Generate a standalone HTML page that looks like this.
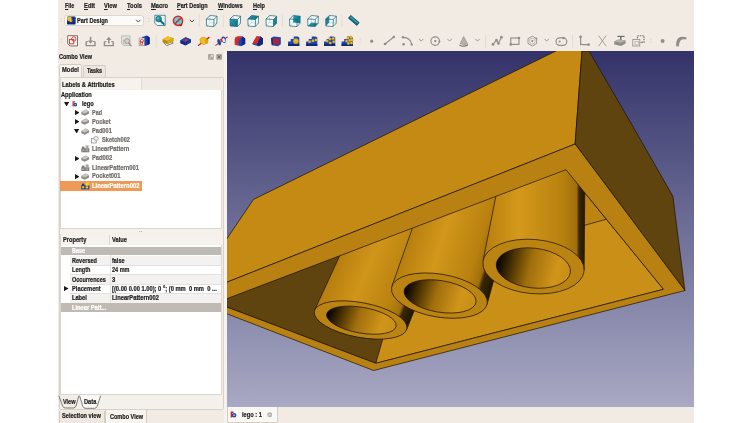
<!DOCTYPE html>
<html><head><meta charset="utf-8"><title>FreeCAD</title>
<style>
html,body{margin:0;padding:0;background:#ffffff;}
body{width:752px;height:423px;position:relative;overflow:hidden;font-family:"Liberation Sans", sans-serif;}
.t{position:absolute;white-space:nowrap;transform-origin:0 50%;-webkit-text-stroke:0.22px currentColor;}
.b{position:absolute;box-sizing:border-box;}
u{text-decoration-thickness:0.5px;text-underline-offset:0.6px;}
</style></head><body>
<div id="app" style="position:absolute;left:0;top:0;width:752px;height:423px;will-change:transform;">
<div class="b" style="left:58px;top:0px;width:636px;height:423px;background:#f2ebe4;"></div>
<svg style="position:absolute;left:0;top:0" width="752" height="423" viewBox="0 0 752 423">
<defs>
<linearGradient id="bg" x1="0" y1="0" x2="0" y2="1"><stop offset="0" stop-color="#33336a"/><stop offset="1" stop-color="#a9a9c4"/></linearGradient>
<clipPath id="vc"><rect x="227" y="51" width="467" height="356"/></clipPath>
<linearGradient id="t1" gradientUnits="userSpaceOnUse" x1="314.2" y1="312.5" x2="399.1" y2="348.1"><stop offset="0" stop-color="#b57d0e"/><stop offset="0.35" stop-color="#d0951a"/><stop offset="0.74" stop-color="#b8810f"/><stop offset="0.85" stop-color="#a06e0b"/><stop offset="0.885" stop-color="#3a2800"/><stop offset="1" stop-color="#1f1500"/></linearGradient>
<linearGradient id="t2" gradientUnits="userSpaceOnUse" x1="391.3" y1="289.3" x2="483.1" y2="317.7"><stop offset="0" stop-color="#b57d0e"/><stop offset="0.35" stop-color="#d2971b"/><stop offset="0.74" stop-color="#b8810f"/><stop offset="0.85" stop-color="#a06e0b"/><stop offset="0.885" stop-color="#3a2800"/><stop offset="1" stop-color="#1f1500"/></linearGradient>
<linearGradient id="t3" gradientUnits="userSpaceOnUse" x1="482.8" y1="263.4" x2="585.2" y2="263.4"><stop offset="0" stop-color="#b57d0e"/><stop offset="0.35" stop-color="#d4991b"/><stop offset="0.78" stop-color="#b8810f"/><stop offset="0.915" stop-color="#a06e0b"/><stop offset="0.94" stop-color="#3a2800"/><stop offset="1" stop-color="#1f1500"/></linearGradient>
<linearGradient id="h1" gradientUnits="userSpaceOnUse" x1="327" y1="315" x2="395" y2="327"><stop offset="0" stop-color="#000"/><stop offset="0.12" stop-color="#2a1c00"/><stop offset="0.45" stop-color="#a06e0c"/><stop offset="0.8" stop-color="#d0951a"/><stop offset="1" stop-color="#c88e16"/></linearGradient>
<linearGradient id="h2" gradientUnits="userSpaceOnUse" x1="404" y1="291" x2="474" y2="301"><stop offset="0" stop-color="#000"/><stop offset="0.12" stop-color="#2a1c00"/><stop offset="0.45" stop-color="#a06e0c"/><stop offset="0.8" stop-color="#d0951a"/><stop offset="1" stop-color="#c88e16"/></linearGradient>
<linearGradient id="h3" gradientUnits="userSpaceOnUse" x1="496" y1="264" x2="571" y2="273"><stop offset="0" stop-color="#000"/><stop offset="0.12" stop-color="#2a1c00"/><stop offset="0.45" stop-color="#a06e0c"/><stop offset="0.8" stop-color="#d0951a"/><stop offset="1" stop-color="#c88e16"/></linearGradient>
</defs>
<g clip-path="url(#vc)">
<rect x="227" y="51" width="467" height="356" fill="url(#bg)"/>
<polygon points="215.8,302.9 566,169.7 663.5,289.3 375.8,363.3" fill="#c98f16" stroke="#1a1200" stroke-width="0.7" stroke-linejoin="round"/>
<polygon points="566,169.7 606.3,219.2 560,232.2" fill="#bd8412" stroke="#1a1200" stroke-width="0.7" stroke-linejoin="round"/>
<polygon points="215.8,302.9 360,235 390,314 375.8,363.3" fill="#5f4410" stroke="#1a1200" stroke-width="0.7" stroke-linejoin="round"/>
<polygon points="351.6,230 448.4,225 406.54892708381936,329.8647614373134 360.6,320 314.79733099899687,309.79311197358766" fill="url(#t1)" stroke="#1a1200" stroke-width="0.7" stroke-linejoin="round"/>
<ellipse cx="360.6" cy="320" rx="47.1" ry="17.4" transform="rotate(10.6 360.6 320)" fill="#bb8312" stroke="#1a1200" stroke-width="0.7" />
<ellipse cx="361.4" cy="320.2" rx="35.3" ry="12.9" transform="rotate(9.8 361.4 320.2)" fill="url(#h1)" stroke="#1a1200" stroke-width="0.7" />
<polygon points="422.3,200 518.4,190 487.03453907284097,304.52214531459106 439.4,295.6 391.9783687617179,285.99194550559884" fill="url(#t2)" stroke="#1a1200" stroke-width="0.7" stroke-linejoin="round"/>
<ellipse cx="439.4" cy="295.6" rx="48.5" ry="21.5" transform="rotate(9.5 439.4 295.6)" fill="#bb8312" stroke="#1a1200" stroke-width="0.7" />
<ellipse cx="440.1" cy="296.4" rx="36.4" ry="15.8" transform="rotate(9.3 440.1 296.4)" fill="url(#h2)" stroke="#1a1200" stroke-width="0.7" />
<polygon points="501,170 585,160 584.1615498378931,269.79571051568746 533.5,266.55 483.1040630658077,260.62238553709454" fill="url(#t3)" stroke="#1a1200" stroke-width="0.7" stroke-linejoin="round"/>
<ellipse cx="533.5" cy="266.55" rx="50.8" ry="27.1" transform="rotate(5 533.5 266.55)" fill="#bb8312" stroke="#1a1200" stroke-width="0.7" />
<ellipse cx="533.35" cy="268.05" rx="37.3" ry="19.9" transform="rotate(6.6 533.35 268.05)" fill="url(#h3)" stroke="#1a1200" stroke-width="0.7" />
<polygon points="253.5,199.4 556,51 600,20 582,51 575.1,144 186.6,298.2" fill="#c48a13" stroke="#1a1200" stroke-width="0.7" stroke-linejoin="round"/>
<polygon points="575.1,144 582,51 589,51 629.2,120 672.9,196.3 684.9,290.5" fill="#5f4410" stroke="#1a1200" stroke-width="0.7" stroke-linejoin="round"/>
<path d="M186.6,298.2 L575.1,144 L684.9,290.5 L373.6,370.5Z M215.8,302.9 L566,169.7 L663.5,289.3 L375.8,363.3Z" fill="#b88111" fill-rule="evenodd" stroke="#1a1200" stroke-width="0.7" stroke-linejoin="round"/>
</g></svg>
<span class="t" id="t0" style="left:64.8px;top:1.70px;font-size:6.5px;line-height:7.80px;font-weight:bold;color:#1f1f1f;transform:scaleX(0.8201);"><u>F</u>ile</span>
<span class="t" id="t1" style="left:83.5px;top:1.70px;font-size:6.5px;line-height:7.80px;font-weight:bold;color:#1f1f1f;transform:scaleX(0.8945);"><u>E</u>dit</span>
<span class="t" id="t2" style="left:104px;top:1.70px;font-size:6.5px;line-height:7.80px;font-weight:bold;color:#1f1f1f;transform:scaleX(0.8842);"><u>V</u>iew</span>
<span class="t" id="t3" style="left:126.5px;top:1.70px;font-size:6.5px;line-height:7.80px;font-weight:bold;color:#1f1f1f;transform:scaleX(0.8889);"><u>T</u>ools</span>
<span class="t" id="t4" style="left:150.5px;top:1.70px;font-size:6.5px;line-height:7.80px;font-weight:bold;color:#1f1f1f;transform:scaleX(0.8874);"><u>M</u>acro</span>
<span class="t" id="t5" style="left:177px;top:1.70px;font-size:6.5px;line-height:7.80px;font-weight:bold;color:#1f1f1f;transform:scaleX(0.8439);"><u>P</u>art Design</span>
<span class="t" id="t6" style="left:218px;top:1.70px;font-size:6.5px;line-height:7.80px;font-weight:bold;color:#1f1f1f;transform:scaleX(0.8606);"><u>W</u>indows</span>
<span class="t" id="t7" style="left:252.5px;top:1.70px;font-size:6.5px;line-height:7.80px;font-weight:bold;color:#1f1f1f;transform:scaleX(0.8505);"><u>H</u>elp</span>
<div class="b" style="left:64.3px;top:15.2px;width:79.5px;height:11px;background:#fcfbf9;border:0.6px solid #ddd6cd;border-radius:2.5px;"></div>
<span class="t" id="t8" style="left:77px;top:16.90px;font-size:6.5px;line-height:7.80px;font-weight:bold;color:#1f1f1f;transform:scaleX(0.8581);">Part Design</span>
<svg style="position:absolute;left:0;top:0" width="752" height="52" viewBox="0 0 752 52">
<defs><linearGradient id="tealg" x1="0" y1="0" x2="1" y2="1"><stop offset="0" stop-color="#2a9db4"/><stop offset="1" stop-color="#0f6c82"/></linearGradient></defs>
<rect x="60.6" y="18.3" width="0.9" height="0.9" fill="#cbc4bb"/><rect x="60.6" y="21.1" width="0.9" height="0.9" fill="#cbc4bb"/>
<g transform="translate(67 16.6) scale(1)"><rect x="0" y="0" width="8.6" height="8" rx="1.2" fill="#0d2a80"/><polygon points="0.2,0.4 4.2,0.4 6.4,4 4,5.6 0.2,3.6" fill="#f0c020"/><rect x="4.6" y="1" width="3.6" height="3" fill="#1a36a0"/></g>
<path d="M136.10000000000002,19.799999999999997 L138.3,22.0 L140.5,19.799999999999997" fill="none" stroke="#3a3836" stroke-width="0.9"/>
<rect x="148.4" y="18.3" width="0.9" height="0.9" fill="#cbc4bb"/><rect x="148.4" y="21.1" width="0.9" height="0.9" fill="#cbc4bb"/>
<g transform="translate(154.3 14.8) scale(1)"><path d="M0.5,0.5 h10.4 v10.2 h-8 l-2.4,-2.4z" fill="#f4fbfc" stroke="#0e6274" stroke-width="0.7"/><circle cx="4.4" cy="4.2" r="2.9" fill="#1f8ea3" stroke="#0e6274" stroke-width="0.6"/><circle cx="3.7" cy="3.5" r="1.1" fill="#5fc4d6"/><path d="M6.4,6.2 L9.4,9.2" stroke="#0e6274" stroke-width="1.8" stroke-linecap="round"/></g>
<g transform="translate(172.4 15.4) scale(1)"><circle cx="7.8" cy="8.6" r="2.2" fill="#5a1a10"/><circle cx="5.6" cy="5.4" r="4.6" fill="#59d0e6" stroke="#dc2a20" stroke-width="1.5"/><path d="M2.3,8.6 L8.9,2.2" stroke="#dc2a20" stroke-width="1.5"/></g>
<path d="M189.8,19.799999999999997 L192,22.0 L194.2,19.799999999999997" fill="none" stroke="#3a3836" stroke-width="0.9"/>
<line x1="199.3" y1="14.5" x2="199.3" y2="27" stroke="#ddd6cd" stroke-width="0.7"/>
<g transform="translate(205.6 14.6) scale(1)"><polygon points="0.80,4.40 4.50,0.90 11.40,1.60 11.20,8.70 8.20,11.90 1.00,11.40" fill="#fbfdfd"/><line x1="4.20" y1="8.00" x2="4.50" y2="0.90" stroke="#7fb9c4" stroke-width="0.45" fill="none"/><line x1="4.20" y1="8.00" x2="11.20" y2="8.70" stroke="#7fb9c4" stroke-width="0.45" fill="none"/><line x1="4.20" y1="8.00" x2="1.00" y2="11.40" stroke="#7fb9c4" stroke-width="0.45" fill="none"/><polygon points="0.80,4.40 4.50,0.90 11.40,1.60 11.20,8.70 8.20,11.90 1.00,11.40" stroke="#0e6274" stroke-width="0.7" fill="none" stroke-linejoin="round"/><line x1="0.80" y1="4.40" x2="8.40" y2="4.80" stroke="#0e6274" stroke-width="0.7" fill="none" stroke-linejoin="round"/><line x1="8.40" y1="4.80" x2="11.40" y2="1.60" stroke="#0e6274" stroke-width="0.7" fill="none" stroke-linejoin="round"/><line x1="8.40" y1="4.80" x2="8.20" y2="11.90" stroke="#0e6274" stroke-width="0.7" fill="none" stroke-linejoin="round"/></g>
<line x1="223.2" y1="14.5" x2="223.2" y2="27" stroke="#ddd6cd" stroke-width="0.7"/>
<g transform="translate(229.2 14.6) scale(1)"><polygon points="0.80,4.40 4.50,0.90 11.40,1.60 11.20,8.70 8.20,11.90 1.00,11.40" fill="#fbfdfd"/><line x1="4.20" y1="8.00" x2="4.50" y2="0.90" stroke="#7fb9c4" stroke-width="0.45" fill="none"/><line x1="4.20" y1="8.00" x2="11.20" y2="8.70" stroke="#7fb9c4" stroke-width="0.45" fill="none"/><line x1="4.20" y1="8.00" x2="1.00" y2="11.40" stroke="#7fb9c4" stroke-width="0.45" fill="none"/><polygon points="0.80,4.40 8.40,4.80 8.20,11.90 1.00,11.40" fill="url(#tealg)"/><polygon points="0.80,4.40 4.50,0.90 11.40,1.60 11.20,8.70 8.20,11.90 1.00,11.40" stroke="#0e6274" stroke-width="0.7" fill="none" stroke-linejoin="round"/><line x1="0.80" y1="4.40" x2="8.40" y2="4.80" stroke="#0e6274" stroke-width="0.7" fill="none" stroke-linejoin="round"/><line x1="8.40" y1="4.80" x2="11.40" y2="1.60" stroke="#0e6274" stroke-width="0.7" fill="none" stroke-linejoin="round"/><line x1="8.40" y1="4.80" x2="8.20" y2="11.90" stroke="#0e6274" stroke-width="0.7" fill="none" stroke-linejoin="round"/></g>
<g transform="translate(247.1 14.6) scale(1)"><polygon points="0.80,4.40 4.50,0.90 11.40,1.60 11.20,8.70 8.20,11.90 1.00,11.40" fill="#fbfdfd"/><line x1="4.20" y1="8.00" x2="4.50" y2="0.90" stroke="#7fb9c4" stroke-width="0.45" fill="none"/><line x1="4.20" y1="8.00" x2="11.20" y2="8.70" stroke="#7fb9c4" stroke-width="0.45" fill="none"/><line x1="4.20" y1="8.00" x2="1.00" y2="11.40" stroke="#7fb9c4" stroke-width="0.45" fill="none"/><polygon points="0.80,4.40 4.50,0.90 11.40,1.60 8.40,4.80" fill="url(#tealg)"/><polygon points="0.80,4.40 4.50,0.90 11.40,1.60 11.20,8.70 8.20,11.90 1.00,11.40" stroke="#0e6274" stroke-width="0.7" fill="none" stroke-linejoin="round"/><line x1="0.80" y1="4.40" x2="8.40" y2="4.80" stroke="#0e6274" stroke-width="0.7" fill="none" stroke-linejoin="round"/><line x1="8.40" y1="4.80" x2="11.40" y2="1.60" stroke="#0e6274" stroke-width="0.7" fill="none" stroke-linejoin="round"/><line x1="8.40" y1="4.80" x2="8.20" y2="11.90" stroke="#0e6274" stroke-width="0.7" fill="none" stroke-linejoin="round"/></g>
<g transform="translate(265.2 14.6) scale(1)"><polygon points="0.80,4.40 4.50,0.90 11.40,1.60 11.20,8.70 8.20,11.90 1.00,11.40" fill="#fbfdfd"/><line x1="4.20" y1="8.00" x2="4.50" y2="0.90" stroke="#7fb9c4" stroke-width="0.45" fill="none"/><line x1="4.20" y1="8.00" x2="11.20" y2="8.70" stroke="#7fb9c4" stroke-width="0.45" fill="none"/><line x1="4.20" y1="8.00" x2="1.00" y2="11.40" stroke="#7fb9c4" stroke-width="0.45" fill="none"/><polygon points="8.40,4.80 11.40,1.60 11.20,8.70 8.20,11.90" fill="url(#tealg)"/><polygon points="0.80,4.40 4.50,0.90 11.40,1.60 11.20,8.70 8.20,11.90 1.00,11.40" stroke="#0e6274" stroke-width="0.7" fill="none" stroke-linejoin="round"/><line x1="0.80" y1="4.40" x2="8.40" y2="4.80" stroke="#0e6274" stroke-width="0.7" fill="none" stroke-linejoin="round"/><line x1="8.40" y1="4.80" x2="11.40" y2="1.60" stroke="#0e6274" stroke-width="0.7" fill="none" stroke-linejoin="round"/><line x1="8.40" y1="4.80" x2="8.20" y2="11.90" stroke="#0e6274" stroke-width="0.7" fill="none" stroke-linejoin="round"/></g>
<line x1="282.4" y1="14.5" x2="282.4" y2="27" stroke="#ddd6cd" stroke-width="0.7"/>
<g transform="translate(288.8 14.6) scale(1)"><polygon points="0.80,4.40 4.50,0.90 11.40,1.60 11.20,8.70 8.20,11.90 1.00,11.40" fill="#fbfdfd"/><polygon points="4.50,0.90 11.40,1.60 11.20,8.70 4.20,8.00" fill="url(#tealg)"/><line x1="4.20" y1="8.00" x2="4.50" y2="0.90" stroke="#7fb9c4" stroke-width="0.45" fill="none"/><line x1="4.20" y1="8.00" x2="11.20" y2="8.70" stroke="#7fb9c4" stroke-width="0.45" fill="none"/><line x1="4.20" y1="8.00" x2="1.00" y2="11.40" stroke="#7fb9c4" stroke-width="0.45" fill="none"/><polygon points="0.80,4.40 4.50,0.90 11.40,1.60 11.20,8.70 8.20,11.90 1.00,11.40" stroke="#0e6274" stroke-width="0.7" fill="none" stroke-linejoin="round"/><line x1="0.80" y1="4.40" x2="8.40" y2="4.80" stroke="#0e6274" stroke-width="0.7" fill="none" stroke-linejoin="round"/><line x1="8.40" y1="4.80" x2="11.40" y2="1.60" stroke="#0e6274" stroke-width="0.7" fill="none" stroke-linejoin="round"/><line x1="8.40" y1="4.80" x2="8.20" y2="11.90" stroke="#0e6274" stroke-width="0.7" fill="none" stroke-linejoin="round"/></g>
<g transform="translate(306.9 14.6) scale(1)"><polygon points="0.80,4.40 4.50,0.90 11.40,1.60 11.20,8.70 8.20,11.90 1.00,11.40" fill="#fbfdfd"/><polygon points="1.00,11.40 8.20,11.90 11.20,8.70 4.20,8.00" fill="url(#tealg)"/><line x1="4.20" y1="8.00" x2="4.50" y2="0.90" stroke="#7fb9c4" stroke-width="0.45" fill="none"/><line x1="4.20" y1="8.00" x2="11.20" y2="8.70" stroke="#7fb9c4" stroke-width="0.45" fill="none"/><line x1="4.20" y1="8.00" x2="1.00" y2="11.40" stroke="#7fb9c4" stroke-width="0.45" fill="none"/><polygon points="0.80,4.40 4.50,0.90 11.40,1.60 11.20,8.70 8.20,11.90 1.00,11.40" stroke="#0e6274" stroke-width="0.7" fill="none" stroke-linejoin="round"/><line x1="0.80" y1="4.40" x2="8.40" y2="4.80" stroke="#0e6274" stroke-width="0.7" fill="none" stroke-linejoin="round"/><line x1="8.40" y1="4.80" x2="11.40" y2="1.60" stroke="#0e6274" stroke-width="0.7" fill="none" stroke-linejoin="round"/><line x1="8.40" y1="4.80" x2="8.20" y2="11.90" stroke="#0e6274" stroke-width="0.7" fill="none" stroke-linejoin="round"/></g>
<g transform="translate(324.9 14.6) scale(1)"><polygon points="0.80,4.40 4.50,0.90 11.40,1.60 11.20,8.70 8.20,11.90 1.00,11.40" fill="#fbfdfd"/><polygon points="0.80,4.40 4.50,0.90 4.20,8.00 1.00,11.40" fill="url(#tealg)"/><line x1="4.20" y1="8.00" x2="4.50" y2="0.90" stroke="#7fb9c4" stroke-width="0.45" fill="none"/><line x1="4.20" y1="8.00" x2="11.20" y2="8.70" stroke="#7fb9c4" stroke-width="0.45" fill="none"/><line x1="4.20" y1="8.00" x2="1.00" y2="11.40" stroke="#7fb9c4" stroke-width="0.45" fill="none"/><polygon points="0.80,4.40 4.50,0.90 11.40,1.60 11.20,8.70 8.20,11.90 1.00,11.40" stroke="#0e6274" stroke-width="0.7" fill="none" stroke-linejoin="round"/><line x1="0.80" y1="4.40" x2="8.40" y2="4.80" stroke="#0e6274" stroke-width="0.7" fill="none" stroke-linejoin="round"/><line x1="8.40" y1="4.80" x2="11.40" y2="1.60" stroke="#0e6274" stroke-width="0.7" fill="none" stroke-linejoin="round"/><line x1="8.40" y1="4.80" x2="8.20" y2="11.90" stroke="#0e6274" stroke-width="0.7" fill="none" stroke-linejoin="round"/></g>
<line x1="342" y1="14.5" x2="342" y2="27" stroke="#ddd6cd" stroke-width="0.7"/>
<g transform="translate(348.3 15) scale(1)"><polygon points="2.4,0.4 10.8,7.6 8.6,10.4 0.2,3.2" fill="#167286" stroke="#0b4554" stroke-width="0.8"/><polygon points="2.6,1.4 9.6,7.4 9,8.2 2,2.2" fill="#5fc4d6" opacity="0.7"/></g>
<rect x="60.6" y="38.8" width="0.9" height="0.9" fill="#cbc4bb"/><rect x="60.6" y="41.6" width="0.9" height="0.9" fill="#cbc4bb"/>
<g transform="translate(67.2 35.2) scale(1)"><path d="M0.5,0.5 h9.8 v10.2 h-7.6 l-2.2,-2.2z" fill="#fbfbfb" stroke="#55524e" stroke-width="0.8"/><rect x="2.2" y="4.2" width="4.4" height="4.4" fill="none" stroke="#dc2a20" stroke-width="0.9"/><circle cx="6.6" cy="3.8" r="2.2" fill="none" stroke="#dc2a20" stroke-width="0.9"/></g>
<g transform="translate(85.5 36.4) scale(1)"><path d="M0.7,5 v4.2 h8.8 v-4.2" fill="none" stroke="#918e89" stroke-width="1.4"/><path d="M0.7,5.2 h2 M7.5,5.2 h2" stroke="#918e89" stroke-width="1"/><path d="M5.1,0.4 V5" stroke="#918e89" stroke-width="1.5"/><path d="M2.5,4.2 L5.1,7.4 L7.7,4.2z" fill="#918e89"/></g>
<g transform="translate(103.7 36.4) scale(1)"><path d="M0.7,5 v4.2 h8.8 v-4.2" fill="none" stroke="#918e89" stroke-width="1.4"/><path d="M0.7,5.2 h2 M7.5,5.2 h2" stroke="#918e89" stroke-width="1"/><path d="M5.1,7.2 V2" stroke="#918e89" stroke-width="1.5"/><path d="M2.5,3.6 L5.1,0.4 L7.7,3.6z" fill="#918e89"/></g>
<g transform="translate(121.1 35.4) scale(1)"><path d="M0.5,0.5 h8.4 v9.6 h-6.4 l-2,-2z" fill="#e4e2df" stroke="#b4b1ac" stroke-width="0.8"/><path d="M2,5 h3 v3 h-3z" fill="none" stroke="#b4b1ac" stroke-width="0.7"/><circle cx="6" cy="5.6" r="2.4" fill="#d6d4d0" stroke="#918e89" stroke-width="0.8"/><path d="M7.8,7.6 L10,10.4" stroke="#918e89" stroke-width="1.3" stroke-linecap="round"/></g>
<g transform="translate(138.7 35.4) scale(1)"><polygon points="3.4,1.6 8,0.2 11,2.2 11,8.6 6.6,10.6 3.4,8.8" fill="#1d45b8"/><polygon points="8,0.2 11,2.2 11,8.6 8.2,9.8" fill="#0d2a80"/><path d="M0.5,2.6 h5.2 v7.6 h-5.2z" fill="#fbfbfb" stroke="#77736e" stroke-width="0.6"/><circle cx="3.2" cy="5.6" r="1.6" fill="none" stroke="#dc2a20" stroke-width="0.8"/><rect x="1.6" y="6.4" width="2.4" height="2.4" fill="none" stroke="#dc2a20" stroke-width="0.7"/></g>
<line x1="156.2" y1="35" x2="156.2" y2="47.5" stroke="#ddd6cd" stroke-width="0.7"/>
<g transform="translate(162.2 36) scale(1)"><polygon points="1.4,6.6 7.6,5 11,7 4.6,9.6" fill="#fafafa" stroke="#3a3835" stroke-width="0.6"/><polygon points="0.4,3.2 5.6,0.4 11.2,2 11.2,5.2 5.2,8.2 0.4,6.2" fill="#b88a10"/><polygon points="0.4,3.2 5.6,0.4 11.2,2 5.6,5" fill="#f0c020"/><polygon points="5.6,5 11.2,2 11.2,5.2 5.2,8.2" fill="#d9a515"/></g>
<g transform="translate(179.8 36.6) scale(1)"><polygon points="0.4,3.8 5.8,0.6 11.2,2.8 11.2,5.6 5.6,9 0.4,6.6" fill="#0d2a80"/><polygon points="0.4,3.8 5.8,0.6 11.2,2.8 5.6,6.2" fill="#1d45b8"/><polygon points="3.6,3.6 6,2.2 8.4,3.2 6,4.8" fill="#dc2a20"/><polygon points="5.6,6.2 11.2,2.8 11.2,5.6 5.6,9" fill="#1634a0"/></g>
<g transform="translate(197.7 36) scale(1)"><path d="M0.4,9.6 L11.6,1.2" stroke="#dc2a20" stroke-width="1.1"/><path d="M2.2,3.4 Q3.4,0.6 6.2,1.2 L9.8,2.8 Q11,5 9.6,7.4 L5.4,8.6 Q2,7.6 2.2,3.4z" fill="#f0c020" stroke="#b88a10" stroke-width="0.5"/><path d="M6.6,4.6 Q8,2.6 9.8,2.8 Q11,5 9.6,7.4 Q7.4,7.6 6.6,4.6z" fill="#d9a515"/><path d="M0.4,9.6 L3.4,7.4 M9,3.2 L11.6,1.2" stroke="#dc2a20" stroke-width="1.1"/></g>
<g transform="translate(215.2 35.6) scale(1)"><path d="M0.2,10 L12.4,1.2" stroke="#dc2a20" stroke-width="1.1"/><path d="M2,5.4 Q1.6,3.2 4,3.4 L5.6,6.4 Q6.4,9.6 4.4,10 Q2.4,9 2,5.4z" fill="#1d45b8"/><path d="M6.4,1.6 Q8.6,0 10.2,2.4 Q11.4,5.6 9.8,7.6 Q7.6,7.6 6.6,5z" fill="#1d45b8"/><path d="M4.8,3.4 Q6.4,2.2 7.4,4 Q7.8,6 6.6,6.8 Q5.2,6 4.8,3.4z" fill="#dc2a20"/><ellipse cx="8.6" cy="4.6" rx="1.3" ry="2.2" fill="#e9eefc" transform="rotate(-25 8.6 4.6)"/></g>
<g transform="translate(234.4 36) scale(1)"><path d="M0.4,3.4 Q0.6,0.8 4,0.6 L8.4,0.4 L10.8,2.4 L10.8,8 L6.6,10.2 L0.4,8.6z" fill="#1d45b8"/><path d="M0.4,3.6 Q0.4,0.8 4.2,0.6 L8.4,0.4 L7.4,2 Q4.4,2 4.2,5.4 L4,9.6 L0.4,8.6z" fill="#dc2a20"/><path d="M8.4,0.4 L10.8,2.4 L10.8,8 L7.2,9.8 L7.4,2z" fill="#0d2a80"/></g>
<g transform="translate(252.2 36) scale(1)"><polygon points="0.4,7.2 4.2,0.6 8.4,0.4 10.8,2.4 10.8,8 6.6,10.2 0.4,8.6" fill="#1d45b8"/><polygon points="0.4,7.2 4.2,0.6 8.4,0.4 4.6,8.4" fill="#dc2a20"/><polygon points="8.4,0.4 10.8,2.4 10.8,8 6.6,10.2 4.6,8.4" fill="#0d2a80"/></g>
<g transform="translate(270.2 36) scale(1)"><polygon points="0.8,2 3.6,0.4 10.6,1.2 10.6,8.2 7.8,10.2 1.6,9.2" fill="#1d45b8"/><polygon points="2.4,2.8 9,2.4 8.6,8.4 2.8,8.2" fill="#b0242a"/><polygon points="0.8,2 2.4,2.8 2.8,8.2 1.6,9.2" fill="#0d2a80"/></g>
<g transform="translate(287.7 35.4) scale(1)"><polygon points="0.4,6 3,6 3,3.6 6,3.6 6,1 10,1 11.6,2.2 11.6,10.6 0.4,10.6" fill="#1d45b8"/><polygon points="0.4,8.4 11.6,8.4 11.6,10.6 0.4,10.6" fill="#0d2a80"/><circle cx="8.2" cy="5.8" r="2.6" fill="#f0c020" stroke="#b88a10" stroke-width="0.4"/><path d="M5.8,6.4 Q8.2,7.4 10.6,6.2" stroke="#b88a10" stroke-width="0.5" fill="none"/></g>
<g transform="translate(305.7 35.4) scale(1)"><polygon points="0.4,6 3,6 3,3.6 6,3.6 6,1 10,1 11.6,2.2 11.6,10.6 0.4,10.6" fill="#1d45b8"/><polygon points="0.4,8.4 11.6,8.4 11.6,10.6 0.4,10.6" fill="#0d2a80"/><circle cx="4" cy="6.4" r="1.3" fill="#f0c020" stroke="#b88a10" stroke-width="0.3"/><circle cx="7.2" cy="5.4" r="1.3" fill="#f0c020" stroke="#b88a10" stroke-width="0.3"/><circle cx="10.2" cy="4.6" r="1.3" fill="#f0c020" stroke="#b88a10" stroke-width="0.3"/></g>
<g transform="translate(323.6 35.4) scale(1)"><polygon points="0.4,6 3,6 3,3.6 6,3.6 6,1 10,1 11.6,2.2 11.6,10.6 0.4,10.6" fill="#1d45b8"/><polygon points="0.4,8.4 11.6,8.4 11.6,10.6 0.4,10.6" fill="#0d2a80"/><circle cx="3.6" cy="5.6" r="1.3" fill="#f0c020" stroke="#b88a10" stroke-width="0.3"/><circle cx="6.4" cy="3.6" r="1.3" fill="#f0c020" stroke="#b88a10" stroke-width="0.3"/><circle cx="9.6" cy="3.2" r="1.3" fill="#f0c020" stroke="#b88a10" stroke-width="0.3"/><circle cx="10.2" cy="6.4" r="1.3" fill="#f0c020" stroke="#b88a10" stroke-width="0.3"/><circle cx="6.6" cy="7.6" r="1.3" fill="#f0c020" stroke="#b88a10" stroke-width="0.3"/></g>
<g transform="translate(341.2 35.4) scale(1)"><polygon points="0.4,6 3,6 3,3.6 6,3.6 6,1 10,1 11.6,2.2 11.6,10.6 0.4,10.6" fill="#1d45b8"/><polygon points="0.4,8.4 11.6,8.4 11.6,10.6 0.4,10.6" fill="#0d2a80"/><circle cx="6.8" cy="2.6" r="1.3" fill="#f0c020" stroke="#b88a10" stroke-width="0.3"/><circle cx="9.8" cy="1.8" r="1.3" fill="#f0c020" stroke="#b88a10" stroke-width="0.3"/><circle cx="5.4" cy="5.6" r="1.3" fill="#f0c020" stroke="#b88a10" stroke-width="0.3"/><circle cx="8.6" cy="5" r="1.3" fill="#f0c020" stroke="#b88a10" stroke-width="0.3"/><circle cx="10.8" cy="4.6" r="1.3" fill="#f0c020" stroke="#b88a10" stroke-width="0.3"/><circle cx="7.2" cy="8" r="1.3" fill="#f0c020" stroke="#b88a10" stroke-width="0.3"/><circle cx="10.2" cy="7.6" r="1.3" fill="#f0c020" stroke="#b88a10" stroke-width="0.3"/></g>
<rect x="359.6" y="38.8" width="0.9" height="0.9" fill="#cbc4bb"/><rect x="359.6" y="41.6" width="0.9" height="0.9" fill="#cbc4bb"/>
<circle cx="371.7" cy="41.2" r="1.6" fill="#918e89"/>
<path d="M385,44 L393.8,37" stroke="#918e89" fill="none" stroke-width="1.15"/><circle cx="385" cy="44" r="1.3" fill="#918e89"/><circle cx="393.8" cy="37" r="1.3" fill="#918e89"/>
<path d="M403,37.4 Q410.6,37.6 411.6,44.4" stroke="#918e89" fill="none" stroke-width="1.15"/><circle cx="403" cy="37.2" r="1.2" fill="#918e89"/><circle cx="411.8" cy="44.6" r="1.2" fill="#918e89"/><circle cx="403.6" cy="44.2" r="1.3" fill="#918e89"/>
<path d="M419.0,38.9 L421.2,41.1 L423.4,38.9" fill="none" stroke="#918e89" stroke-width="0.9"/>
<circle cx="435.2" cy="41.1" r="4.3" stroke="#918e89" fill="none" stroke-width="1.15"/><circle cx="435.2" cy="41.1" r="1.2" fill="#918e89"/><circle cx="439.4" cy="41.6" r="1" fill="#918e89"/>
<path d="M447.40000000000003,38.9 L449.6,41.1 L451.8,38.9" fill="none" stroke="#918e89" stroke-width="0.9"/>
<path d="M463.6,36.6 L460.2,43.6 Q463.6,46 467.4,43.4z" fill="#b4b1ac" stroke="#918e89" stroke-width="0.7"/><path d="M459.4,44.4 Q463.6,47.4 468,44 L468,45.4 Q463.6,48 459.4,45.8z" fill="#6e6b67"/>
<path d="M475.3,38.9 L477.5,41.1 L479.7,38.9" fill="none" stroke="#918e89" stroke-width="0.9"/>
<line x1="485.6" y1="35" x2="485.6" y2="47.5" stroke="#ddd6cd" stroke-width="0.7"/>
<path d="M493,44.4 L496.4,40.2 L498.4,43.4 L501.4,37.2" stroke="#918e89" fill="none" stroke-width="1.15"/><circle cx="493" cy="44.4" r="1.35" fill="#918e89"/><circle cx="496.4" cy="40.2" r="1.35" fill="#918e89"/><circle cx="498.4" cy="43.4" r="1.35" fill="#918e89"/><circle cx="501.4" cy="37.2" r="1.35" fill="#918e89"/>
<rect x="510.8" y="38" width="8.2" height="6.4" stroke="#918e89" fill="none" stroke-width="1.15"/><circle cx="510.8" cy="44.4" r="1.35" fill="#918e89"/><circle cx="519" cy="38" r="1.35" fill="#918e89"/>
<polygon points="532.3,36.2 536.6,38.6 536.6,43.6 532.3,46 528,43.6 528,38.6" stroke="#918e89" fill="none" stroke-width="0.9"/><circle cx="532.3" cy="41.1" r="2.9" stroke="#b4b1ac" fill="none" stroke-width="0.8"/><circle cx="532.3" cy="41.1" r="1.1" fill="#918e89"/><circle cx="536.4" cy="38.4" r="1" fill="#918e89"/>
<path d="M544.5,38.9 L546.7,41.1 L548.9000000000001,38.9" fill="none" stroke="#918e89" stroke-width="0.9"/>
<rect x="556" y="37.8" width="10.8" height="7.6" rx="3.8" stroke="#918e89" fill="none" stroke-width="1.15"/><circle cx="559.6" cy="41.6" r="1" fill="#918e89"/><circle cx="563.4" cy="38" r="1.2" fill="#918e89"/>
<line x1="572.5" y1="35" x2="572.5" y2="47.5" stroke="#ddd6cd" stroke-width="0.7"/>
<path d="M580.6,36.8 V43 Q580.8,44.6 582.6,44.6 H588.6" stroke="#918e89" fill="none" stroke-width="1.15"/><circle cx="580.6" cy="36.8" r="1.35" fill="#918e89"/><circle cx="588.6" cy="44.6" r="1.35" fill="#918e89"/><circle cx="580.8" cy="44.4" r="0.9" fill="#918e89"/>
<path d="M598.6,35.6 L606.2,46.2 M606,35.6 L598.6,46.2" stroke="#918e89" stroke-width="0.8"/>
<path d="M617.4,36.4 H624.6" stroke="#6e6b67" stroke-width="1.2"/><path d="M620.8,36.4 V40" stroke="#6e6b67" stroke-width="1.4"/><polygon points="614.2,41.6 618.4,39.6 625.6,40.6 625.6,43.6 621.2,46 614.2,44.6" fill="#918e89"/><polygon points="614.2,41.6 618.4,39.6 625.6,40.6 621.2,42.8" fill="#b4b1ac"/>
<rect x="637.4" y="35.8" width="6.6" height="6.6" fill="none" stroke="#6e6b67" stroke-width="1.1" stroke-dasharray="1.5 0.9"/><rect x="632.8" y="39.4" width="7" height="6.6" fill="#efebe6" stroke="#918e89" stroke-width="0.8"/><rect x="635" y="41.6" width="3.4" height="2.8" fill="none" stroke="#b4b1ac" stroke-width="0.7"/>
<rect x="650.4" y="38.8" width="0.9" height="0.9" fill="#cbc4bb"/><rect x="650.4" y="41.6" width="0.9" height="0.9" fill="#cbc4bb"/>
<circle cx="662.6" cy="40.9" r="2" fill="#918e89"/>
<path d="M676.2,46.2 Q675.6,38.4 680.4,37 Q683.6,36.2 686.6,37.6 L686.2,39.4 Q682.4,38.6 680.6,40.4 Q679,42.4 678.8,46.4z" fill="#918e89"/>
</svg>
<span class="t" id="t9" style="left:59.2px;top:52.70px;font-size:6.5px;line-height:7.80px;font-weight:bold;color:#1f1f1f;transform:scaleX(0.8485);">Combo View</span>
<svg class="b" style="left:208.1px;top:54.1px" width="14" height="5.8" viewBox="0 0 14 5.8"><rect x="0" y="0" width="5.7" height="5.7" rx="0.8" fill="#aca69e"/><path d="M1.3,4.4 L4.4,1.3 M2.6,1.3 H4.4 V3.1" stroke="#f4f1ed" stroke-width="0.7" fill="none"/><rect x="8.3" y="0" width="5.7" height="5.7" rx="0.8" fill="#aca69e"/><path d="M9.7,1.4 L12.6,4.3 M12.6,1.4 L9.7,4.3" stroke="#57534f" stroke-width="0.8"/></svg>
<div class="b" style="left:59.3px;top:63.8px;width:23px;height:13.5px;background:#f6f2ed;border:0.6px solid #d3ccc3;border-radius:2px 2px 0 0;border-bottom:none;"></div>
<div class="b" style="left:82.8px;top:65.2px;width:23px;height:11.5px;background:#ece6df;border:0.6px solid #d3ccc3;border-radius:2px 2px 0 0;border-bottom:none;"></div>
<span class="t" id="t10" style="left:62.3px;top:66.40px;font-size:6.5px;line-height:7.80px;font-weight:bold;color:#1f1f1f;transform:scaleX(0.8945);">Model</span>
<span class="t" id="t11" style="left:86.8px;top:67.10px;font-size:6.5px;line-height:7.80px;font-weight:bold;color:#1f1f1f;transform:scaleX(0.8355);">Tasks</span>
<div class="b" style="left:224px;top:51px;width:3px;height:372px;background:#f6f3ef;"></div>
<div class="b" style="left:59.3px;top:76.6px;width:164.9px;height:333.2px;background:#f4f0eb;border:0.8px solid #d9d0c7;border-radius:1.5px;"></div>
<div class="b" style="left:60.3px;top:78px;width:161.8px;height:151.3px;background:#ffffff;border:0.6px solid #ddd6cd;"></div>
<div class="b" style="left:60.6px;top:78.4px;width:81.5px;height:12px;background:#f6f3ef;border-right:0.6px solid #e2dcd4;"></div>
<div class="b" style="left:142.2px;top:78.4px;width:79.6px;height:12px;background:#f0ebe5;"></div>
<span class="t" id="t12" style="left:61.5px;top:80.50px;font-size:6.5px;line-height:7.80px;font-weight:bold;color:#1f1f1f;transform:scaleX(0.8861);">Labels &amp; Attributes</span>
<span class="t" id="t13" style="left:61px;top:90.80px;font-size:6.5px;line-height:7.80px;font-weight:bold;color:#1f1f1f;transform:scaleX(0.8703);">Application</span>
<svg class="b" style="left:63.49999999999999px;top:101.6px" width="5.2" height="4.6" viewBox="0 0 5.2 4.6"><polygon points="0,0 5.2,0 2.6,4.6" fill="#1a1a1a"/></svg>
<svg class="b" style="left:71.8px;top:100.8px" width="5.4" height="5.8" viewBox="0 0 6.6 7"><path d="M0.6,0.4 h3 v1.5 h-1.6 v1.3 h1.4 v1.4 h-1.4 v2 h-1.4z" fill="#d8281e"/><circle cx="4" cy="4.3" r="2.3" fill="#2747b0"/><circle cx="4" cy="4.3" r="0.8" fill="#c7d0ee"/></svg>
<span class="t" id="t14" style="left:81.8px;top:99.90px;font-size:6.5px;line-height:7.80px;font-weight:bold;color:#1c1c1c;transform:scaleX(0.8822);">lego</span>
<svg class="b" style="left:74.6px;top:110.2px" width="4.6" height="5.2" viewBox="0 0 4.6 5.2"><polygon points="0,0 4.6,2.6 0,5.2" fill="#1a1a1a"/></svg>
<svg class="b" style="left:81px;top:109.2px" width="8.4" height="7.2" viewBox="0 0 8.4 7.2"><polygon points="0.3,3 4.6,0.6 8.1,2.2 8.1,4.4 3.8,6.8 0.3,5.2" fill="#8e8b86"/><polygon points="0.3,3 4.6,0.6 8.1,2.2 3.8,4.6" fill="#c9c6c1"/></svg>
<span class="t" id="t15" style="left:91.8px;top:108.90px;font-size:6.5px;line-height:7.80px;font-weight:bold;color:#6f6c68;transform:scaleX(0.8388);">Pad</span>
<svg class="b" style="left:74.6px;top:119.4px" width="4.6" height="5.2" viewBox="0 0 4.6 5.2"><polygon points="0,0 4.6,2.6 0,5.2" fill="#1a1a1a"/></svg>
<svg class="b" style="left:81px;top:118.4px" width="8.4" height="7.2" viewBox="0 0 8.4 7.2"><polygon points="0.3,3 4.6,0.6 8.1,2.2 8.1,4.4 3.8,6.8 0.3,5.2" fill="#8e8b86"/><polygon points="0.3,3 4.6,0.6 8.1,2.2 3.8,4.6" fill="#c9c6c1"/></svg>
<span class="t" id="t16" style="left:91.8px;top:118.10px;font-size:6.5px;line-height:7.80px;font-weight:bold;color:#6f6c68;transform:scaleX(0.8721);">Pocket</span>
<svg class="b" style="left:74.0px;top:128.9px" width="5.2" height="4.6" viewBox="0 0 5.2 4.6"><polygon points="0,0 5.2,0 2.6,4.6" fill="#1a1a1a"/></svg>
<svg class="b" style="left:81px;top:127.5px" width="8.4" height="7.2" viewBox="0 0 8.4 7.2"><polygon points="0.3,3 4.6,0.6 8.1,2.2 8.1,4.4 3.8,6.8 0.3,5.2" fill="#8e8b86"/><polygon points="0.3,3 4.6,0.6 8.1,2.2 3.8,4.6" fill="#c9c6c1"/></svg>
<span class="t" id="t17" style="left:91.8px;top:127.20px;font-size:6.5px;line-height:7.80px;font-weight:bold;color:#6f6c68;transform:scaleX(0.8691);">Pad001</span>
<svg class="b" style="left:91.2px;top:136.39999999999998px" width="8" height="7.6" viewBox="0 0 8 7.6"><rect x="0.6" y="2.4" width="4.6" height="4.6" fill="#f4f4f4" stroke="#8a8782" stroke-width="0.7"/><rect x="3" y="0.6" width="4.2" height="3.6" rx="1.6" fill="#f4f4f4" stroke="#8a8782" stroke-width="0.7"/></svg>
<span class="t" id="t18" style="left:101.9px;top:136.30px;font-size:6.5px;line-height:7.80px;font-weight:bold;color:#6f6c68;transform:scaleX(0.8703);">Sketch002</span>
<svg class="b" style="left:81.2px;top:145.39999999999998px" width="8.6" height="7.6" viewBox="0 0 8.6 7.6"><rect x="0.3" y="3.2" width="8" height="4.1" fill="#7d7a76"/><rect x="1" y="1.6" width="2.4" height="2.4" fill="#7d7a76"/><rect x="4.6" y="0.4" width="3" height="3.4" fill="#a9a6a1"/><rect x="1.2" y="4.2" width="2" height="2" fill="#a9a6a1"/><rect x="4.6" y="4.4" width="2.6" height="2" fill="#a9a6a1"/></svg>
<span class="t" id="t19" style="left:91.8px;top:145.30px;font-size:6.5px;line-height:7.80px;font-weight:bold;color:#6f6c68;transform:scaleX(0.8925);">LinearPattern</span>
<svg class="b" style="left:74.6px;top:155.70000000000002px" width="4.6" height="5.2" viewBox="0 0 4.6 5.2"><polygon points="0,0 4.6,2.6 0,5.2" fill="#1a1a1a"/></svg>
<svg class="b" style="left:81px;top:154.70000000000002px" width="8.4" height="7.2" viewBox="0 0 8.4 7.2"><polygon points="0.3,3 4.6,0.6 8.1,2.2 8.1,4.4 3.8,6.8 0.3,5.2" fill="#8e8b86"/><polygon points="0.3,3 4.6,0.6 8.1,2.2 3.8,4.6" fill="#c9c6c1"/></svg>
<span class="t" id="t20" style="left:91.8px;top:154.40px;font-size:6.5px;line-height:7.80px;font-weight:bold;color:#6f6c68;transform:scaleX(0.8911);">Pad002</span>
<svg class="b" style="left:81.2px;top:163.6px" width="8.6" height="7.6" viewBox="0 0 8.6 7.6"><rect x="0.3" y="3.2" width="8" height="4.1" fill="#7d7a76"/><rect x="1" y="1.6" width="2.4" height="2.4" fill="#7d7a76"/><rect x="4.6" y="0.4" width="3" height="3.4" fill="#a9a6a1"/><rect x="1.2" y="4.2" width="2" height="2" fill="#a9a6a1"/><rect x="4.6" y="4.4" width="2.6" height="2" fill="#a9a6a1"/></svg>
<span class="t" id="t21" style="left:91.8px;top:163.50px;font-size:6.5px;line-height:7.80px;font-weight:bold;color:#6f6c68;transform:scaleX(0.8891);">LinearPattern001</span>
<svg class="b" style="left:74.6px;top:173.70000000000002px" width="4.6" height="5.2" viewBox="0 0 4.6 5.2"><polygon points="0,0 4.6,2.6 0,5.2" fill="#1a1a1a"/></svg>
<svg class="b" style="left:81px;top:172.70000000000002px" width="8.4" height="7.2" viewBox="0 0 8.4 7.2"><polygon points="0.3,3 4.6,0.6 8.1,2.2 8.1,4.4 3.8,6.8 0.3,5.2" fill="#8e8b86"/><polygon points="0.3,3 4.6,0.6 8.1,2.2 3.8,4.6" fill="#c9c6c1"/></svg>
<span class="t" id="t22" style="left:91.8px;top:172.40px;font-size:6.5px;line-height:7.80px;font-weight:bold;color:#6f6c68;transform:scaleX(0.8828);">Pocket001</span>
<div class="b" style="left:59.8px;top:181.1px;width:82.3px;height:9.5px;background:#ee9a56;"></div>
<svg class="b" style="left:81.2px;top:182.0px" width="8.6" height="7.6" viewBox="0 0 8.6 7.6"><rect x="0.3" y="3.2" width="8" height="4.1" fill="#1c3f94"/><rect x="1" y="1.6" width="2.4" height="2.4" fill="#1c3f94"/><rect x="4.6" y="0.4" width="3" height="3.4" fill="#f2d21a"/><rect x="1.2" y="4.2" width="2" height="2" fill="#f2d21a"/><rect x="4.6" y="4.4" width="2.6" height="2" fill="#f2d21a"/></svg>
<span class="t" id="t23" style="left:91.8px;top:181.90px;font-size:6.5px;line-height:7.80px;font-weight:bold;color:#ffffff;transform:scaleX(0.8986);">LinearPattern002</span>
<div class="b" style="left:138.5px;top:230.9px;width:1px;height:0.8px;background:#bdb6ad;"></div>
<div class="b" style="left:141px;top:230.9px;width:1px;height:0.8px;background:#bdb6ad;"></div>
<div class="b" style="left:60.3px;top:233.6px;width:161.8px;height:161px;background:#ffffff;border:0.6px solid #ddd6cd;"></div>
<div class="b" style="left:60.6px;top:234px;width:161px;height:11.3px;background:#f5f1ec;"></div>
<div class="b" style="left:109.4px;top:234.6px;width:0.6px;height:10px;background:#ddd6cd;"></div>
<span class="t" id="t24" style="left:62.8px;top:236.10px;font-size:6.5px;line-height:7.80px;font-weight:bold;color:#1f1f1f;transform:scaleX(0.8715);">Property</span>
<span class="t" id="t25" style="left:112.4px;top:236.10px;font-size:6.5px;line-height:7.80px;font-weight:bold;color:#1f1f1f;transform:scaleX(0.8832);">Value</span>
<div class="b" style="left:60.6px;top:246.6px;width:160.9px;height:8.8px;background:#bfbab4;"></div>
<span class="t" id="t26" style="left:71.8px;top:247.10px;font-size:6.5px;line-height:7.80px;font-weight:bold;color:#ffffff;transform:scaleX(0.8362);">Base</span>
<div class="b" style="left:70.3px;top:255.99999999999997px;width:151.2px;height:8.8px;background:#f3f2f1;"></div>
<div class="b" style="left:60.6px;top:255.99999999999997px;width:9.6px;height:8.9px;"></div>
<span class="t" id="t27" style="left:71.8px;top:256.50px;font-size:6.5px;line-height:7.80px;font-weight:bold;color:#1f1f1f;transform:scaleX(0.8538);">Reversed</span>
<span class="t" id="t28" style="left:112.4px;top:256.50px;font-size:6.5px;line-height:7.80px;font-weight:bold;color:#1f1f1f;transform:scaleX(0.8430);white-space:pre;">false</span>
<div class="b" style="left:70.3px;top:264.9px;width:151.2px;height:0.5px;background:#e4e0db;"></div>
<div class="b" style="left:60.6px;top:265.5px;width:9.6px;height:8.9px;"></div>
<span class="t" id="t29" style="left:71.8px;top:266.00px;font-size:6.5px;line-height:7.80px;font-weight:bold;color:#1f1f1f;transform:scaleX(0.8536);">Length</span>
<span class="t" id="t30" style="left:112.4px;top:266.00px;font-size:6.5px;line-height:7.80px;font-weight:bold;color:#1f1f1f;transform:scaleX(0.8491);white-space:pre;">24 mm</span>
<div class="b" style="left:70.3px;top:274.4px;width:151.2px;height:0.5px;background:#e4e0db;"></div>
<div class="b" style="left:70.3px;top:275.0px;width:151.2px;height:8.8px;background:#f3f2f1;"></div>
<div class="b" style="left:60.6px;top:275.0px;width:9.6px;height:8.9px;"></div>
<span class="t" id="t31" style="left:71.8px;top:275.50px;font-size:6.5px;line-height:7.80px;font-weight:bold;color:#1f1f1f;transform:scaleX(0.8503);">Occurrences</span>
<span class="t" id="t32" style="left:112.4px;top:275.50px;font-size:6.5px;line-height:7.80px;font-weight:bold;color:#1f1f1f;transform:scaleX(0.9000);white-space:pre;">3</span>
<div class="b" style="left:70.3px;top:283.9px;width:151.2px;height:0.5px;background:#e4e0db;"></div>
<div class="b" style="left:60.6px;top:284.40000000000003px;width:9.6px;height:8.9px;"></div>
<span class="t" id="t33" style="left:71.8px;top:284.90px;font-size:6.5px;line-height:7.80px;font-weight:bold;color:#1f1f1f;transform:scaleX(0.8853);">Placement</span>
<span class="t" id="t34" style="left:112.4px;top:284.90px;font-size:6.5px;line-height:7.80px;font-weight:bold;color:#1f1f1f;transform:scaleX(0.8865);white-space:pre;">[(0.00 0.00 1.00); 0 °; (0 mm  0 mm  0 ...</span>
<div class="b" style="left:70.3px;top:293.3px;width:151.2px;height:0.5px;background:#e4e0db;"></div>
<div class="b" style="left:70.3px;top:293.8px;width:151.2px;height:8.8px;background:#f3f2f1;"></div>
<div class="b" style="left:60.6px;top:293.8px;width:9.6px;height:8.9px;"></div>
<span class="t" id="t35" style="left:71.8px;top:294.30px;font-size:6.5px;line-height:7.80px;font-weight:bold;color:#1f1f1f;transform:scaleX(0.8714);">Label</span>
<span class="t" id="t36" style="left:112.4px;top:294.30px;font-size:6.5px;line-height:7.80px;font-weight:bold;color:#1f1f1f;transform:scaleX(0.8891);white-space:pre;">LinearPattern002</span>
<div class="b" style="left:70.3px;top:302.7px;width:151.2px;height:0.5px;background:#e4e0db;"></div>
<div class="b" style="left:109.6px;top:255.4px;width:0.5px;height:47.6px;background:#e4e0db;"></div>
<svg class="b" style="left:64.4px;top:286.2px" width="4.6" height="5.2" viewBox="0 0 4.6 5.2"><polygon points="0,0 4.6,2.6 0,5.2" fill="#1a1a1a"/></svg>
<div class="b" style="left:60.6px;top:303.4px;width:160.9px;height:8.8px;background:#bfbab4;"></div>
<span class="t" id="t37" style="left:71.8px;top:303.90px;font-size:6.5px;line-height:7.80px;font-weight:bold;color:#ffffff;transform:scaleX(0.8791);">Linear Patt...</span>
<svg class="b" style="left:58px;top:394px" width="80" height="16" viewBox="58 394 80 16"><path d="M58.9,395.8 L62.6,406 Q63.3,408 65.4,408 L73.2,408 Q75.3,408 76,406 L78.9,395.8" fill="#f1ece6" stroke="#4a4744" stroke-width="0.7"/><path d="M79.6,395.8 L82.8,406.3 Q83.5,408.3 85.6,408.3 L94.4,408.3 Q96.5,408.3 97.2,406.3 L100.6,395.8" fill="#fbfaf8" stroke="#4a4744" stroke-width="0.7"/></svg>
<span class="t" id="t38" style="left:63.2px;top:397.70px;font-size:6.5px;line-height:7.80px;font-weight:bold;color:#1f1f1f;transform:scaleX(0.8502);">View</span>
<span class="t" id="t39" style="left:84.3px;top:397.70px;font-size:6.5px;line-height:7.80px;font-weight:bold;color:#1f1f1f;transform:scaleX(0.8727);">Data</span>
<div class="b" style="left:58.6px;top:410.6px;width:46px;height:13px;background:#eee8e1;border:0.6px solid #d3ccc3;border-radius:0 0 2px 2px;border-top:none;"></div>
<div class="b" style="left:105px;top:410.2px;width:42.4px;height:13.4px;background:#f7f4f0;border:0.6px solid #d3ccc3;border-radius:0 0 2px 2px;border-top:none;"></div>
<span class="t" id="t40" style="left:62.3px;top:412.40px;font-size:6.5px;line-height:7.80px;font-weight:bold;color:#1f1f1f;transform:scaleX(0.8661);">Selection view</span>
<span class="t" id="t41" style="left:109.9px;top:412.50px;font-size:6.5px;line-height:7.80px;font-weight:bold;color:#1f1f1f;transform:scaleX(0.8511);">Combo View</span>
<div class="b" style="left:227px;top:407px;width:51px;height:16px;background:#faf8f5;border:0.6px solid #d3ccc3;border-radius:0 0 2px 2px;border-top:none;"></div>
<svg class="b" style="left:230px;top:411.4px" width="6.6" height="7" viewBox="0 0 6.6 7"><path d="M0.6,0.4 h3 v1.5 h-1.6 v1.3 h1.4 v1.4 h-1.4 v2 h-1.4z" fill="#d8281e"/><circle cx="4" cy="4.3" r="2.3" fill="#2747b0"/><circle cx="4" cy="4.3" r="0.8" fill="#e8ecfa"/></svg>
<span class="t" id="t42" style="left:241.7px;top:411.10px;font-size:6.5px;line-height:7.80px;font-weight:bold;color:#1f1f1f;transform:scaleX(0.8697);">lego : 1</span>
<svg class="b" style="left:267px;top:412.4px" width="5.4" height="5.4" viewBox="0 0 5.4 5.4"><circle cx="2.7" cy="2.7" r="2.5" fill="#b6b1aa"/><path d="M1.7,1.7 L3.7,3.7 M3.7,1.7 L1.7,3.7" stroke="#f4f1ed" stroke-width="0.7"/></svg>
</div>
</body></html>
